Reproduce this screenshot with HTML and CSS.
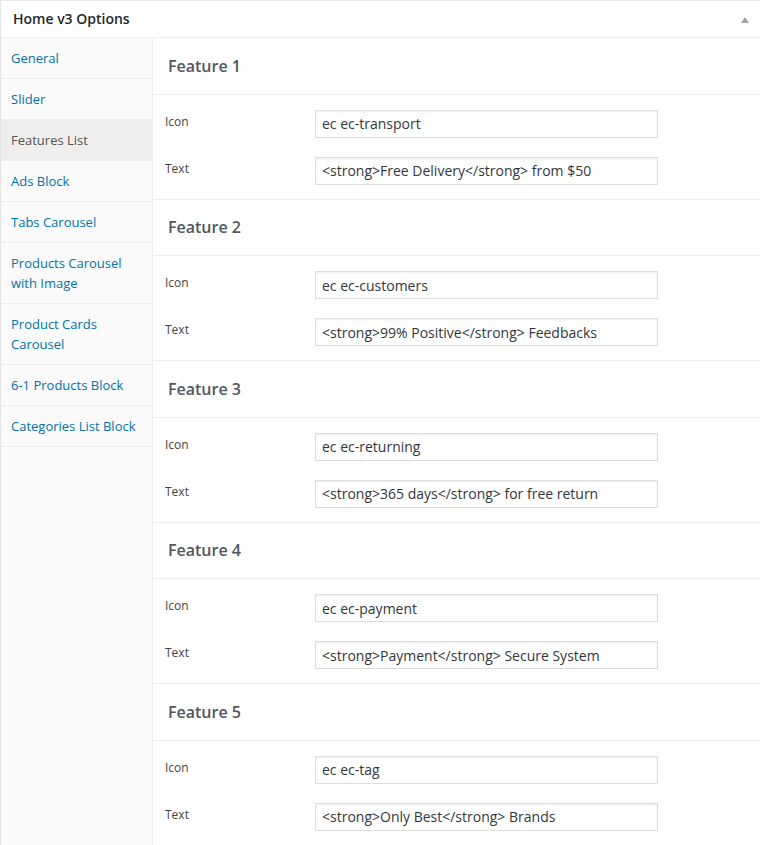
FILE: index.html
```html
<!DOCTYPE html>
<html>
<head>
<meta charset="utf-8">
<link rel="stylesheet" href="styles.css">
</head>
<body>
<div class="postbox">
  <div class="postbox-header">
    <h2 class="postbox-title">Home v3 Options</h2>
    <span class="toggle-arrow"></span>
  </div>
  <div class="postbox-inside">
    <ul class="tabs">
      <li class="tab"><a href="#">General</a></li>
      <li class="tab"><a href="#">Slider</a></li>
      <li class="tab active"><a href="#">Features List</a></li>
      <li class="tab"><a href="#">Ads Block</a></li>
      <li class="tab"><a href="#">Tabs Carousel</a></li>
      <li class="tab"><a href="#">Products Carousel with Image</a></li>
      <li class="tab"><a href="#">Product Cards Carousel</a></li>
      <li class="tab"><a href="#">6-1 Products Block</a></li>
      <li class="tab"><a href="#">Categories List Block</a></li>
    </ul>
    <div class="panel">
      <div class="feature">
        <h3 class="feature-title">Feature 1</h3>
        <div class="fields">
          <div class="field"><label class="field-label">Icon</label><input class="field-input" type="text" value="ec ec-transport"></div>
          <div class="field"><label class="field-label">Text</label><input class="field-input" type="text" value="&lt;strong&gt;Free Delivery&lt;/strong&gt; from $50"></div>
        </div>
      </div>
      <div class="feature">
        <h3 class="feature-title">Feature 2</h3>
        <div class="fields">
          <div class="field"><label class="field-label">Icon</label><input class="field-input" type="text" value="ec ec-customers"></div>
          <div class="field"><label class="field-label">Text</label><input class="field-input" type="text" value="&lt;strong&gt;99% Positive&lt;/strong&gt; Feedbacks"></div>
        </div>
      </div>
      <div class="feature">
        <h3 class="feature-title">Feature 3</h3>
        <div class="fields">
          <div class="field"><label class="field-label">Icon</label><input class="field-input" type="text" value="ec ec-returning"></div>
          <div class="field"><label class="field-label">Text</label><input class="field-input" type="text" value="&lt;strong&gt;365 days&lt;/strong&gt; for free return"></div>
        </div>
      </div>
      <div class="feature">
        <h3 class="feature-title">Feature 4</h3>
        <div class="fields">
          <div class="field"><label class="field-label">Icon</label><input class="field-input" type="text" value="ec ec-payment"></div>
          <div class="field"><label class="field-label">Text</label><input class="field-input" type="text" value="&lt;strong&gt;Payment&lt;/strong&gt; Secure System"></div>
        </div>
      </div>
      <div class="feature">
        <h3 class="feature-title">Feature 5</h3>
        <div class="fields">
          <div class="field"><label class="field-label">Icon</label><input class="field-input" type="text" value="ec ec-tag"></div>
          <div class="field"><label class="field-label">Text</label><input class="field-input" type="text" value="&lt;strong&gt;Only Best&lt;/strong&gt; Brands"></div>
        </div>
      </div>
    </div>
  </div>
</div>
</body>
</html>
```
FILE: styles.css
```css
html, body {
  margin: 0;
  padding: 0;
  background: #fff;
  overflow: hidden;
}
body {
  font-family: "Open Sans", "Liberation Sans", sans-serif;
  color: #444;
  font-size: 13px;
}
.postbox {
  width: 100%;
  border-style: solid;
  border-color: #e5e5e5;
  border-width: 1px 0 1px 1px;
  box-sizing: border-box;
  background: #fff;
}
.postbox-header {
  position: relative;
  height: 36px;
  border-bottom: 1px solid #eee;
  display: flex;
  align-items: center;
  padding: 0 12px;
}
.postbox-title {
  margin: 0;
  font-size: 14px;
  font-weight: 600;
  line-height: 20px;
  color: #23282d;
}
.toggle-arrow {
  position: absolute;
  left: 740px;
  top: 16px;
  width: 0;
  height: 0;
  border-left: 4px solid transparent;
  border-right: 4px solid transparent;
  border-bottom: 6px solid #a0a5aa;
}
.postbox-inside {
  display: flex;
  align-items: stretch;
}
.tabs {
  list-style: none;
  margin: 0;
  padding: 0;
  width: 151px;
  flex: none;
  background: #fafafa;
  border-right: 1px solid #eee;
  min-height: 820px;
}
.tab {
  margin: 0;
  padding: 10px 10px;
  border-bottom: 1px solid #eee;
  line-height: 20px;
  font-size: 13px;
}
.tab a {
  color: #0073aa;
  text-decoration: none;
}
.tab.active {
  background: #eee;
}
.tab.active a {
  color: #555;
}
.panel {
  flex: 1;
  min-width: 0;
}
.feature {
  border-bottom: 1px solid #eee;
}
.feature-title {
  margin: 0;
  height: 55.5px;
  display: flex;
  align-items: center;
  padding: 0 15px;
  font-size: 16px;
  font-weight: 600;
  color: #50575e;
  border-bottom: 1px solid #eee;
}
.fields {
  padding: 15px 0 14px 12px;
  display: flex;
  flex-direction: column;
  gap: 19px;
}
.field {
  display: flex;
  align-items: flex-start;
}
.field-label {
  width: 150px;
  flex: none;
  font-size: 12px;
  line-height: 18px;
  padding-top: 3px;
  color: #444;
}
.field-input {
  width: 343px;
  height: 28px;
  box-sizing: border-box;
  margin: 0;
  border: 1px solid #ddd;
  box-shadow: inset 0 1px 2px rgba(0,0,0,.07);
  background: #fff;
  padding: 0 6px;
  font-family: "Open Sans", "Liberation Sans", sans-serif;
  font-size: 14px;
  color: #32373c;
  border-radius: 0;
  outline: none;
}
```
